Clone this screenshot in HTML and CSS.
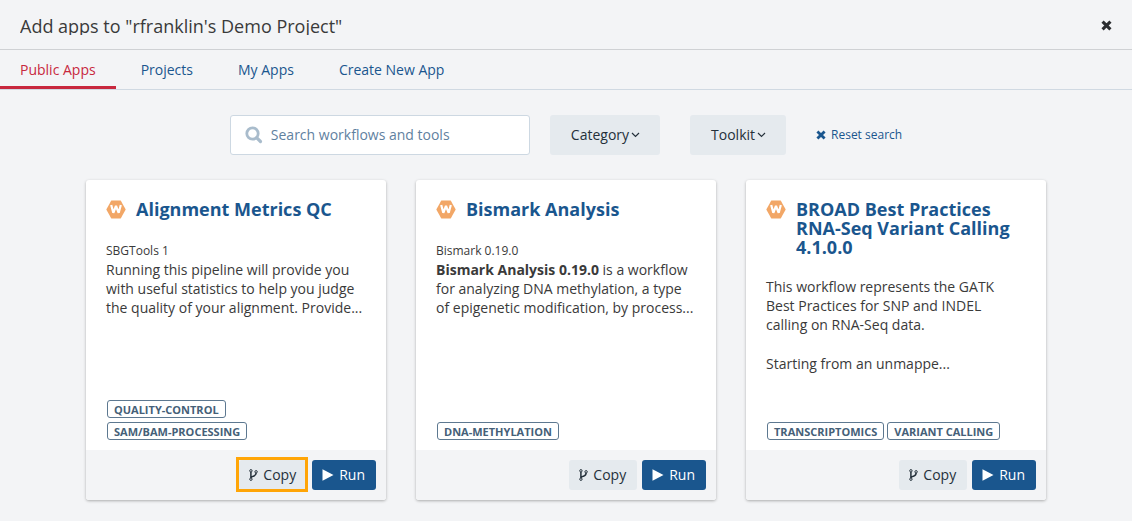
FILE: index.html
```html
<!DOCTYPE html>
<html lang="en">
<head>
<meta charset="utf-8">
<meta name="viewport" content="width=device-width, initial-scale=1">
<title>Add apps</title>
<link rel="stylesheet" href="styles.css">
</head>
<body>
<svg class="sprite" aria-hidden="true">
  <symbol id="times" viewBox="0 0 10 10"><path d="M2.4 2.4 7.6 7.6M7.6 2.4 2.4 7.6" fill="none" stroke="currentColor" stroke-width="2.8" stroke-linecap="square"/></symbol>
  <symbol id="chevron" viewBox="0 0 9 6"><path d="M1 1 4.5 4.5 8 1" fill="none" stroke="currentColor" stroke-width="1.2"/></symbol>
  <symbol id="fork" viewBox="0 0 9 12"><g fill="none" stroke="currentColor" stroke-width="1"><circle cx="1.9" cy="1.8" r="1.2"/><circle cx="1.9" cy="10.2" r="1.2"/><circle cx="7.1" cy="2.8" r="1.2"/></g><path d="M1.9 3v6M7.1 4c0 2.6-1.4 2.8-3 3.3C2.7 7.7 1.9 8 1.9 9" fill="none" stroke="currentColor" stroke-width="1.5"/></symbol>
  <symbol id="play" viewBox="0 0 12 12"><path d="M.5.2 11.500 6 .5 11.800z" fill="currentColor"/></symbol>
  <symbol id="workflow" viewBox="0 0 20 18"><path d="M5.3 0h9.4L19.7 9l-5 9H5.300L.3 9z" fill="#f2a767"/><path d="M5.2 4.500 7.300 12.300 10 5.500l2.700 6.800 2.100-7.800" fill="none" stroke="#fff" stroke-width="2.200" stroke-linejoin="bevel"/></symbol>
</svg>
<header class="header">
  <h1 class="header-title">Add apps to "rfranklin's Demo Project"</h1>
  <button class="close" type="button" aria-label="Close"><svg class="icon-times"><use href="#times"/></svg></button>
</header>
<nav class="tabs">
  <a class="tab tab-active" href="#public">Public Apps</a>
  <a class="tab" href="#projects">Projects</a>
  <a class="tab" href="#mine">My Apps</a>
  <a class="tab" href="#create">Create New App</a>
</nav>
<main class="content">
  <form class="filters">
    <div class="search">
      <svg class="search-icon" viewBox="0 0 18 18" aria-hidden="true"><circle cx="7.5" cy="7.5" r="5.7" fill="none" stroke="currentColor" stroke-width="2.8"/><path d="M11.8 11.8 15.5 15.5" stroke="currentColor" stroke-width="3.2" stroke-linecap="round"/></svg>
      <input class="search-input" type="text" aria-label="Search workflows and tools" placeholder="Search workflows and tools">
    </div>
    <div class="dropdowns">
      <button class="dropdown" type="button">Category<svg class="icon-chevron"><use href="#chevron"/></svg></button>
      <button class="dropdown" type="button">Toolkit<svg class="icon-chevron"><use href="#chevron"/></svg></button>
      <button class="reset" type="reset"><svg class="icon-times"><use href="#times"/></svg>Reset search</button>
    </div>
  </form>
  <div class="cards">
    <article class="card">
      <div class="card-body">
        <h2 class="card-heading"><svg class="card-icon"><use href="#workflow"/></svg><a class="card-title" href="#alignment">Alignment Metrics QC</a></h2>
        <p class="toolkit">SBGTools 1</p>
        <p class="description">Running this pipeline will provide you with useful statistics to help you judge the quality of your alignment. Provide...</p>
        <div class="tags"><span class="tag">QUALITY-CONTROL</span><span class="tag">SAM/BAM-PROCESSING</span></div>
      </div>
      <footer class="card-footer">
        <button class="button copy highlighted" type="button"><svg class="icon-fork"><use href="#fork"/></svg>Copy</button>
        <button class="button run" type="button"><svg class="icon-play"><use href="#play"/></svg>Run</button>
      </footer>
    </article>
    <article class="card">
      <div class="card-body">
        <h2 class="card-heading"><svg class="card-icon"><use href="#workflow"/></svg><a class="card-title" href="#bismark">Bismark Analysis</a></h2>
        <p class="toolkit">Bismark 0.19.0</p>
        <p class="description"><strong>Bismark Analysis 0.19.0</strong> is a workflow for analyzing DNA methylation, a type of epigenetic modification, by process...</p>
        <div class="tags"><span class="tag">DNA-METHYLATION</span></div>
      </div>
      <footer class="card-footer">
        <button class="button copy" type="button"><svg class="icon-fork"><use href="#fork"/></svg>Copy</button>
        <button class="button run" type="button"><svg class="icon-play"><use href="#play"/></svg>Run</button>
      </footer>
    </article>
    <article class="card">
      <div class="card-body">
        <h2 class="card-heading"><svg class="card-icon"><use href="#workflow"/></svg><a class="card-title" href="#broad">BROAD Best Practices RNA-Seq Variant Calling 4.1.0.0</a></h2>
        <p class="description">This workflow represents the GATK Best Practices for SNP and INDEL calling on RNA-Seq data.</p>
        <p class="description">Starting from an unmappe...</p>
        <div class="tags"><span class="tag">TRANSCRIPTOMICS</span><span class="tag">VARIANT CALLING</span></div>
      </div>
      <footer class="card-footer">
        <button class="button copy" type="button"><svg class="icon-fork"><use href="#fork"/></svg>Copy</button>
        <button class="button run" type="button"><svg class="icon-play"><use href="#play"/></svg>Run</button>
      </footer>
    </article>
  </div>
</main>
</body>
</html>
```
FILE: styles.css
```css
* { box-sizing: border-box; }
body {
  margin: 0;
  background: #f3f4f6;
  color: #3a3a3a;
  font: 14px/19px "Open Sans", "Noto Sans", sans-serif;
}
h1, h2, p { margin: 0; }
a { color: inherit; text-decoration: none; }
button {
  border: 0;
  background: none;
  color: inherit;
  font: inherit;
  padding: 0;
  cursor: pointer;
}
svg { display: block; flex: none; }
.sprite { position: absolute; width: 0; height: 0; }

.header {
  display: flex;
  align-items: center;
  justify-content: space-between;
  height: 50px;
  padding: 2px 20px 0;
  border-bottom: 1px solid #cfd1d4;
}
.header-title {
  font-size: 18px;
  font-weight: 400;
  line-height: 18px;
  overflow: hidden;
}
.icon-times { width: 10px; height: 10px; }
.close { color: #2b2d30; }
.close .icon-times { width: 11px; height: 11px; }

.tabs {
  display: flex;
  gap: 5px;
  height: 40px;
  border-bottom: 1px solid #d0d9e2;
  color: #1a568e;
}
.tab {
  padding: 10px 20px 0;
  border-bottom: 3px solid transparent;
}
.tab-active {
  color: #c8283e;
  border-bottom-color: #c8283e;
}

.content { padding: 25px 20px 20px; }
.filters {
  display: flex;
  flex-wrap: wrap;
  justify-content: center;
  gap: 20px;
}
.search {
  display: flex;
  align-items: center;
  gap: 8px;
  width: 300px;
  height: 40px;
  padding: 0 14px 1px;
  background: #fff;
  border: 1px solid #cdd8e2;
  border-radius: 3px;
}
.search-icon { width: 18px; height: 18px; color: #a9bccc; }
.search-input {
  flex: 1;
  min-width: 0;
  border: 0;
  outline: 0;
  padding: 0;
  background: none;
  color: #5f819f;
  font: inherit;
}
.search-input::placeholder { color: #5f819f; opacity: 1; }
.dropdowns { display: flex; gap: 30px; }
.dropdown {
  display: flex;
  align-items: center;
  gap: 2px;
  height: 40px;
  padding: 0 20px 1px 21px;
  border-radius: 3px;
  background: #e5eaee;
  color: #24303a;
}
.icon-chevron { width: 9px; height: 6px; margin-top: 1px; }
.reset {
  display: flex;
  align-items: center;
  gap: 5px;
  padding-bottom: 1px;
  color: #1a568e;
  font-size: 12px;
}

.cards {
  display: grid;
  grid-template-columns: repeat(auto-fit, 300px);
  justify-content: center;
  gap: 30px;
  margin-top: 25px;
}
.card {
  display: flex;
  flex-direction: column;
  min-height: 320px;
  overflow: hidden;
  background: #fff;
  border-radius: 3px;
  box-shadow: 0 1px 3px rgba(0, 0, 0, 0.3);
}
.card-body {
  flex: 1;
  display: flex;
  flex-direction: column;
  padding: 20px 20px 10px;
}
.card-heading {
  display: flex;
  gap: 10px;
  margin-bottom: 20px;
  font-size: 18px;
  line-height: 19px;
}
.card-icon { width: 20px; height: 19px; }
.card-title { color: #1a568e; }
.toolkit { padding-top: 3px; font-size: 12px; line-height: 18px; }
.description + .description { margin-top: 20px; }
.tags {
  display: flex;
  flex-wrap: wrap;
  gap: 4px 3px;
  margin-top: auto;
  padding: 10px 0 0 1px;
}
.tag {
  height: 18px;
  padding: 1px 6px 0;
  border: 1px solid #5d7890;
  border-radius: 3px;
  color: #456078;
  font-size: 11px;
  font-weight: 700;
  line-height: 16px;
}
.card-footer {
  display: flex;
  justify-content: flex-end;
  gap: 5px;
  padding: 10px;
  background: #f3f4f6;
}
.button {
  display: flex;
  align-items: center;
  height: 30px;
  padding: 0 11px 1px 10px;
  border-radius: 3px;
}
.copy { gap: 5px; background: #e5eaee; color: #24303a; }
.run { gap: 5px; background: #1a568e; color: #fff; }
.icon-fork { width: 9px; height: 12px; }
.icon-play { width: 12px; height: 12px; }
.highlighted { position: relative; }
.highlighted::after {
  content: "";
  position: absolute;
  inset: -3px -1px -2px -3px;
  border: 3px solid #ffa507;
}
```
